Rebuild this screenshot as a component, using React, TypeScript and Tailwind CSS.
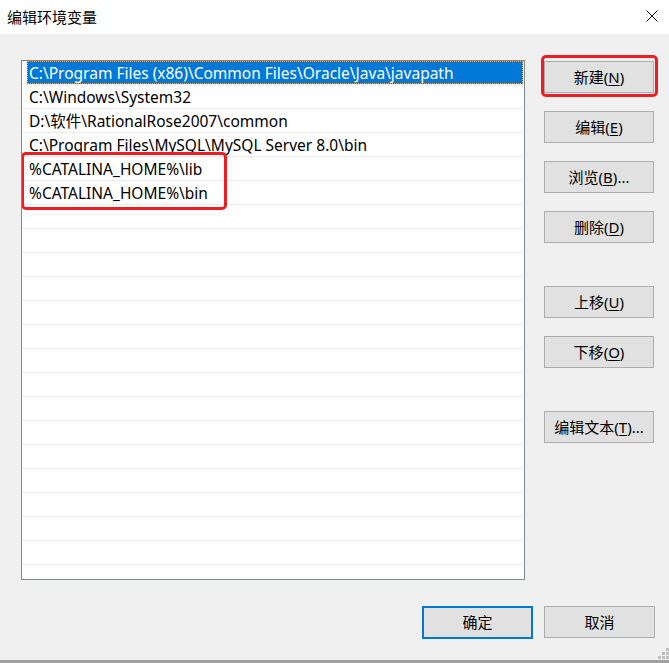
import React from "react";

const rows = [
    "C:\\Program Files (x86)\\Common Files\\Oracle\\Java\\javapath",
    "C:\\Windows\\System32",
    "D:\\软件\\RationalRose2007\\common",
    "C:\\Program Files\\MySQL\\MySQL Server 8.0\\bin",
    "%CATALINA_HOME%\\lib",
    "%CATALINA_HOME%\\bin",
];

const font = "font-['Noto_Sans','Noto_Sans_CJK_SC',sans-serif]";

function Btn({ label, mn, rest = "", className = "" }: { label: string; mn?: string; rest?: string; className?: string }) {
    return (
        <button
            className={`w-[110px] h-[32px] bg-[#e1e1e1] border border-[#adadad] text-[15px] text-black flex items-center justify-center ${className}`}
        >
            {label}
            {mn && (
                <>
                    (<span className="underline underline-offset-2">{mn}</span>){rest}
                </>
            )}
        </button>
    );
}

function Grip() {
    const dots = [
        [8, 0], [8, 4], [4, 4], [8, 8], [4, 8], [0, 8],
    ];
    return (
        <svg width="11" height="11" viewBox="0 0 11 11" className="absolute right-[0px] bottom-[4px]">
            {dots.map(([x, y], i) => (
                <rect key={i} x={x} y={y} width="3" height="3" fill="#bfbfbf" />
            ))}
        </svg>
    );
}

export default function App() {
    return (
        <div className={`w-[669px] h-[663px] bg-[#f0f0f0] flex flex-col relative overflow-hidden ${font}`}>
            {/* title bar */}
            <div className="h-[34px] bg-white flex items-center justify-between pl-[7px] pr-[11px] shrink-0">
                <span className="text-[15px] text-black">编辑环境变量</span>
                <svg width="12" height="12" viewBox="0 0 12 12" className="mt-[-2px]">
                    <path d="M0.5 0.5 L11.5 11.5 M11.5 0.5 L0.5 11.5" stroke="#111" strokeWidth="1" />
                </svg>
            </div>

            <div className="flex pt-[26px] pl-[21px]">
                {/* list */}
                <div className="relative w-[504px] h-[520px] border border-[#828790] bg-white pl-[1px] pr-[1px] overflow-hidden">
                    {Array.from({ length: 22 }).map((_, i) => {
                        const text = rows[i];
                        const sel = i === 0;
                        return (
                            <div key={i} className="h-[24px] border-b border-[#ebebeb] pl-[4px]">
                                <div
                                    className={`h-full flex items-center pl-[2px] pt-[2px] text-[15.5px] whitespace-nowrap ${
                                        sel ? "bg-[#0078d7] text-white outline-1 outline-dotted outline-[#f5a23c] -outline-offset-1" : "text-black"
                                    }`}
                                >
                                    {text}
                                </div>
                            </div>
                        );
                    })}
                    <div className="absolute left-[-1px] top-[91px] w-[206px] h-[58px] border-[3px] border-[#ee1d23] rounded-[5px]" />
                </div>

                {/* side buttons */}
                <div className="flex flex-col pl-[19px] pt-[1px]">
                    <div className="relative">
                        <Btn label="新建" mn="N" />
                        <div className="absolute -left-[3px] -right-[4px] -top-[6px] -bottom-[4px] border-[3px] border-[#ee1d23] rounded-[5px]" />
                    </div>
                    <Btn label="编辑" mn="E" className="mt-[18px]" />
                    <Btn label="浏览" mn="B" rest="..." className="mt-[18px]" />
                    <Btn label="删除" mn="D" className="mt-[18px]" />
                    <Btn label="上移" mn="U" className="mt-[43px]" />
                    <Btn label="下移" mn="O" className="mt-[18px]" />
                    <Btn label="编辑文本" mn="T" rest="..." className="mt-[43px]" />
                </div>
            </div>

            {/* bottom buttons */}
            <div className="flex pl-[422px] pt-[26px] gap-[11px]">
                <button className="w-[111px] h-[33px] bg-[#e1e1e1] border-2 border-[#0078d7] text-[15px] text-black">确定</button>
                <button className="w-[111px] h-[32px] bg-[#e1e1e1] border border-[#adadad] text-[15px] text-black">取消</button>
            </div>

            <div className="flex-1" />
            <div className="h-[3px] bg-[#a0a0a0] shrink-0" />
            <Grip />
        </div>
    );
}
